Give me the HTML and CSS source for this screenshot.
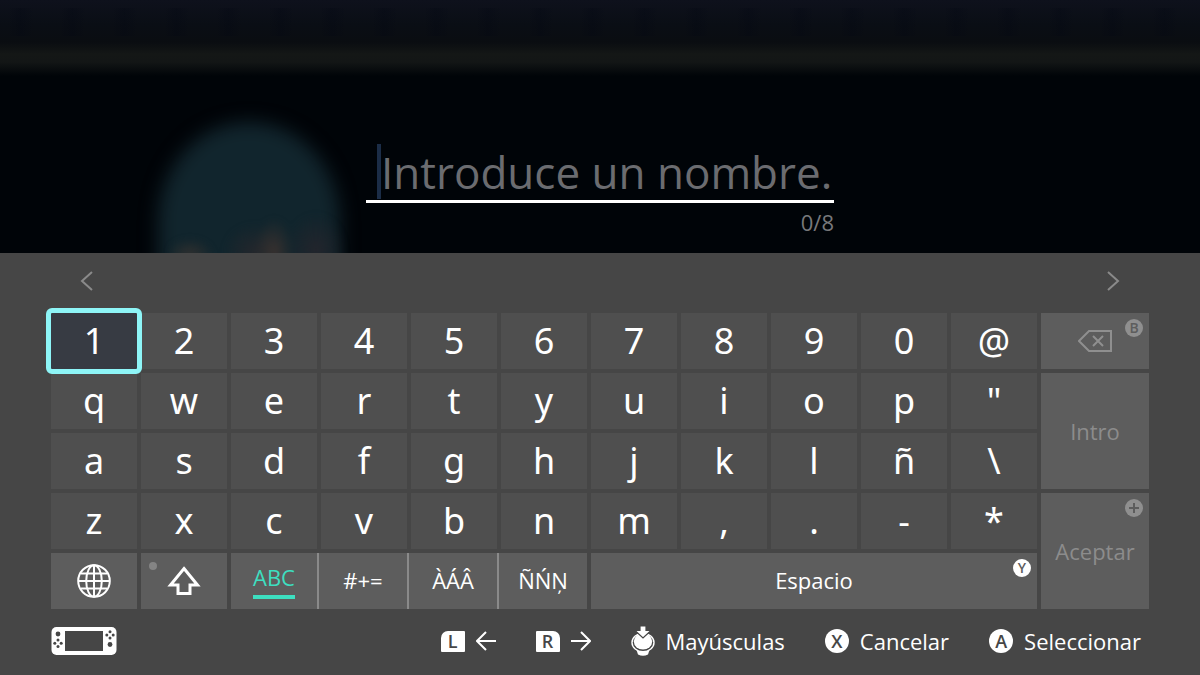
FILE: index.html
```html
<!DOCTYPE html>
<html lang="es">
<head>
    <meta charset="UTF-8">
    <meta name="viewport" content="width=device-width, initial-scale=1.0">
    <title>Introduce un nombre</title>
    <link rel="stylesheet" href="styles.css">
</head>
<body>
    <main class="stage">
        <div class="backdrop">
            <div class="dome"></div>
            <div class="glow"></div>
        </div>
        <div class="name-field">
            <div class="name-row">
                <span class="caret"></span>
                <input type="text" id="name" maxlength="8" placeholder="Introduce un nombre." aria-label="Nombre">
            </div>
            <div class="counter" id="counter">0/8</div>
        </div>
    </main>

    <section class="keyboard">
        <div class="suggestions">
            <button class="arrow" aria-label="Anterior">
                <svg width="14" height="22" viewBox="0 0 14 22"><path d="M12 2 2 11l10 9"/></svg>
            </button>
            <button class="arrow" aria-label="Siguiente">
                <svg width="14" height="22" viewBox="0 0 14 22"><path d="M2 2l10 9-10 9"/></svg>
            </button>
        </div>

        <div class="keys">
            <button class="key selected">1</button>
            <button class="key">2</button>
            <button class="key">3</button>
            <button class="key">4</button>
            <button class="key">5</button>
            <button class="key">6</button>
            <button class="key">7</button>
            <button class="key">8</button>
            <button class="key">9</button>
            <button class="key">0</button>
            <button class="key">@</button>
            <button class="action" aria-label="Borrar">
                <svg class="backspace" width="34" height="22" viewBox="0 0 34 22">
                    <path d="M11 1h22v20H11L1 11z"/>
                    <path d="M15 6l10 10M25 6 15 16"/>
                </svg>
                <span class="badge dim">B</span>
            </button>

            <button class="key">q</button>
            <button class="key">w</button>
            <button class="key">e</button>
            <button class="key">r</button>
            <button class="key">t</button>
            <button class="key">y</button>
            <button class="key">u</button>
            <button class="key">i</button>
            <button class="key">o</button>
            <button class="key">p</button>
            <button class="key">"</button>
            <button class="action tall">Intro</button>

            <button class="key">a</button>
            <button class="key">s</button>
            <button class="key">d</button>
            <button class="key">f</button>
            <button class="key">g</button>
            <button class="key">h</button>
            <button class="key">j</button>
            <button class="key">k</button>
            <button class="key">l</button>
            <button class="key">ñ</button>
            <button class="key">\</button>

            <button class="key">z</button>
            <button class="key">x</button>
            <button class="key">c</button>
            <button class="key">v</button>
            <button class="key">b</button>
            <button class="key">n</button>
            <button class="key">m</button>
            <button class="key">,</button>
            <button class="key">.</button>
            <button class="key">-</button>
            <button class="key">*</button>
            <button class="action tall">Aceptar
                <span class="badge dim">
                    <svg width="12" height="12" viewBox="0 0 12 12"><path d="M6 1v10M1 6h10"/></svg>
                </span>
            </button>

            <button class="action light" aria-label="Idioma">
                <svg class="globe" width="36" height="36" viewBox="0 0 36 36">
                    <circle cx="18" cy="18" r="15.8"/>
                    <ellipse cx="18" cy="18" rx="7.8" ry="15.8"/>
                    <path d="M18 2v32M2 18h32M5 10.500h26M5 25.500h26"/>
                </svg>
            </button>
            <button class="action light" aria-label="Mayúsculas">
                <span class="lock-dot"></span>
                <svg class="shift" width="34" height="30" viewBox="0 0 34 30">
                    <path d="M17 2.500 30.500 19H23v8.500H11V19H3.500z"/>
                </svg>
            </button>
            <div class="modes">
                <button class="mode active"><span>ABC</span></button>
                <button class="mode">#+=</button>
                <button class="mode">ÀÁÂ</button>
                <button class="mode">ÑŃŅ</button>
            </div>
            <button class="action light space">Espacio <span class="badge">Y</span></button>
        </div>

        <footer class="hints">
            <svg class="console" width="66" height="30" viewBox="0 0 66 30">
                <rect x="0.500" y="1" width="65" height="28" rx="5" fill="#fff"/>
                <g fill="#464646">
                    <rect x="14" y="5" width="38" height="20"/>
                    <circle cx="7" cy="8" r="2.400"/>
                    <circle cx="59" cy="18.500" r="2.400"/>
                    <circle cx="7" cy="14" r="1.500"/>
                    <circle cx="7" cy="20.500" r="1.500"/>
                    <circle cx="3.800" cy="17.200" r="1.500"/>
                    <circle cx="10.200" cy="17.200" r="1.500"/>
                    <circle cx="59" cy="5.700" r="1.500"/>
                    <circle cx="59" cy="12.100" r="1.500"/>
                    <circle cx="55.800" cy="8.900" r="1.500"/>
                    <circle cx="62.200" cy="8.900" r="1.500"/>
                </g>
            </svg>
            <div class="hint">
                <span class="shoulder left">L</span>
                <svg class="move" width="20" height="20" viewBox="0 0 20 20"><path d="M20 10H1M10 1 1 10l9 9"/></svg>
            </div>
            <div class="hint">
                <span class="shoulder right">R</span>
                <svg class="move" width="20" height="20" viewBox="0 0 20 20"><path d="M0 10h19M10 1l9 9-9 9"/></svg>
            </div>
            <div class="hint">
                <svg class="stick" width="24" height="30" viewBox="0 0 24 30">
                    <path d="M5.500 24h13l-1.500 4.500q-5 2.500-10 0z" fill="#fff"/>
                    <ellipse cx="12" cy="16.500" rx="11" ry="9.300" fill="#464646" stroke="#fff" stroke-width="1.400"/>
                    <ellipse cx="12" cy="15.500" rx="9.200" ry="8" fill="#fff"/>
                    <path d="M9 0h6v4.500h5l-8 7.500-8-7.500h5z" fill="#fff" stroke="#464646" stroke-width="1.200"/>
                </svg>
                <span>Mayúsculas</span>
            </div>
            <div class="hint"><span class="round">X</span><span>Cancelar</span></div>
            <div class="hint"><span class="round">A</span><span>Seleccionar</span></div>
        </footer>
    </section>

    <script>
        const nameInput = document.getElementById('name');

        nameInput.addEventListener('input', () => {
            document.getElementById('counter').textContent = `${nameInput.value.length}/8`;
        });

        document.querySelectorAll('.key').forEach((key) => {
            key.addEventListener('click', () => {
                document.querySelector('.selected').classList.remove('selected');
                key.classList.add('selected');
                if (nameInput.value.length < 8) {
                    nameInput.value += key.textContent;
                    nameInput.dispatchEvent(new Event('input'));
                }
            });
        });
    </script>
</body>
</html>
```
FILE: styles.css
```css
* {
    box-sizing: border-box;
}

body {
    margin: 0;
    min-height: 100vh;
    display: flex;
    flex-direction: column;
    font-family: "Open Sans", "Noto Sans", sans-serif;
    font-size: 22px;
    color: #fff;
    background: #464646;
}

button {
    font: inherit;
    color: inherit;
    border: none;
    padding: 0;
    margin: 0;
    cursor: pointer;
}

svg {
    display: block;
    flex: none;
}

/* name entry */
.stage {
    flex: 1;
    position: relative;
    overflow: hidden;
    background: #000408;
    padding-top: 144px;
}

.backdrop {
    position: absolute;
    inset: 0;
    background:
        repeating-linear-gradient(90deg, #00000000 0 8px, #02061244 20px, #00000000 34px 52px) 0 8px / 100% 28px no-repeat,
        linear-gradient(#0e111c 0, #0a0e15 24px, #0a0d11 42px, #141716 54px, #131616 62px, #000408 76px);
}

.dome {
    position: absolute;
    left: 158px;
    top: 122px;
    width: 182px;
    height: 240px;
    border-radius: 91px 91px 0 0 / 100px 100px 0 0;
    background: #11252d;
    filter: blur(9px);
}

.glow {
    position: absolute;
    left: 170px;
    top: 200px;
    width: 180px;
    height: 80px;
    background:
        radial-gradient(ellipse 20px 34px at 104px 52px, #38312f, #38312f00),
        radial-gradient(ellipse 30px 28px at 84px 52px, #24272c, #24272c00),
        radial-gradient(ellipse 24px 16px at 20px 54px, #30302f, #30302f00),
        radial-gradient(ellipse 30px 36px at 146px 50px, #23252c, #23252c00);
    filter: blur(3px);
}

.name-field {
    position: relative;
    width: 468px;
    max-width: 100%;
    margin: 0 auto;
}

.name-row {
    display: flex;
    height: 59px;
    padding-left: 11px;
    border-bottom: 3px solid #fff;
}

.caret {
    width: 4px;
    height: 55px;
    background: #1b2d47;
}

.name-row input {
    flex: 1;
    min-width: 0;
    padding: 0;
    border: none;
    outline: none;
    background: none;
    font: inherit;
    font-size: 44px;
    color: #fff;
}

.name-row input::placeholder {
    color: #6b6c70;
    opacity: 1;
}

.counter {
    text-align: right;
    line-height: 38px;
    color: #77787b;
}

/* keyboard */
.keyboard {
    padding: 0 51px;
    background: #464646;
}

.suggestions {
    display: flex;
    justify-content: space-between;
    align-items: center;
    height: 60px;
    padding: 0 29px 4px;
}

.arrow {
    background: none;
}

.arrow path {
    fill: none;
    stroke: #8a8a8a;
    stroke-width: 2;
}

.keys {
    display: grid;
    grid-template-columns: repeat(11, 86fr) 108fr;
    grid-auto-rows: 56px;
    gap: 4px;
}

.key {
    background: #4f4f4f;
    font-family: "Noto Sans", sans-serif;
    font-size: 36px;
    line-height: 56px;
}

.key.selected {
    background: #373b43;
    outline: 5px solid #8ef5f7;
    border-radius: 1px;
    z-index: 1;
}

.action {
    position: relative;
    display: flex;
    align-items: center;
    justify-content: center;
    background: #5d5d5d;
    color: #8c8c8c;
}

.action.light {
    color: #fff;
}

.tall {
    grid-row: span 2;
}

.space {
    grid-column: span 5;
    padding-bottom: 2px;
}

.badge {
    position: absolute;
    top: 6px;
    right: 6px;
    display: flex;
    align-items: center;
    justify-content: center;
    width: 18px;
    height: 18px;
    border-radius: 50%;
    background: #fff;
    color: #5d5d5d;
    font-size: 14px;
    font-weight: 600;
    line-height: 18px;
}

.badge.dim {
    background: #8f8f8f;
}

.badge path {
    stroke: #5d5d5d;
    stroke-width: 2;
}

.backspace path {
    fill: none;
    stroke: #8f8f8f;
    stroke-width: 2;
}

.globe {
    fill: none;
    stroke: #fff;
    stroke-width: 2;
}

.shift {
    fill: none;
    stroke: #fff;
    stroke-width: 3;
}

.lock-dot {
    position: absolute;
    left: 8px;
    top: 9px;
    width: 8px;
    height: 8px;
    border-radius: 50%;
    background: #848484;
}

.modes {
    grid-column: span 4;
    display: grid;
    grid-template-columns: 86fr 90fr 90fr 90fr;
    background: #5d5d5d;
}

.mode {
    background: none;
    border-left: 2px solid #8a8a8a;
    padding-bottom: 2px;
}

.mode.active {
    border-left: none;
    color: #3ddfc0;
}

.mode.active span {
    display: inline-block;
    line-height: 26px;
    padding-bottom: 5px;
    border-bottom: 4px solid #3ddfc0;
}

/* button hints */
.hints {
    display: flex;
    align-items: center;
    gap: 40px;
    height: 66px;
    padding: 0 8px 2px 0;
}

.console {
    margin-right: auto;
}

.hint {
    display: flex;
    align-items: center;
    gap: 11px;
}

.shoulder,
.round {
    display: flex;
    align-items: center;
    justify-content: center;
    width: 24px;
    background: #fff;
    color: #464646;
    font-size: 18px;
    font-weight: 600;
}

.shoulder {
    height: 21px;
    line-height: 20px;
}

.shoulder.left {
    border-radius: 7px 1px 1px 1px;
}

.shoulder.right {
    border-radius: 1px 7px 1px 1px;
}

.round {
    height: 24px;
    line-height: 24px;
    border-radius: 50%;
}

.move path {
    fill: none;
    stroke: #fff;
    stroke-width: 2;
}
```
